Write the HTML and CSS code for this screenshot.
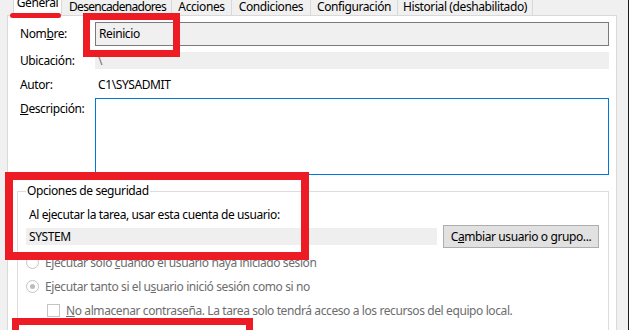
FILE: index.html
```html
<!DOCTYPE html>
<html lang="es">
<head>
    <meta charset="UTF-8">
    <title>Propiedades de la tarea</title>
    <link rel="stylesheet" href="styles.css">
</head>
<body>
    <div class="window">
        <div class="tabs">
            <div class="tab active tab-general">General</div>
            <div class="tab tab-triggers">Desencadenadores</div>
            <div class="tab tab-actions">Acciones</div>
            <div class="tab tab-conditions">Condiciones</div>
            <div class="tab tab-settings">Configuración</div>
            <div class="tab tab-history">Historial (deshabilitado)</div>
        </div>

        <div class="panel">
            <div class="row row-name">
                <label class="label">Nom<u>b</u>re:</label>
                <div class="field field-input">Reinicio</div>
            </div>
            <div class="row row-location">
                <label class="label">Ubicación:</label>
                <div class="field field-readonly">\</div>
            </div>
            <div class="row row-author">
                <label class="label">Autor:</label>
                <div class="field">C1\SYSADMIT</div>
            </div>
            <div class="row row-desc">
                <label class="label"><u>D</u>escripción:</label>
                <div class="field field-textarea"></div>
            </div>

            <fieldset class="group">
                <legend>Opciones de seguridad</legend>
                <p class="group-text">Al ejecutar la tarea, usar esta cuenta de usuario:</p>
                <div class="account-row">
                    <div class="account">SYSTEM</div>
                    <button class="btn">C<u>a</u>mbiar usuario o grupo...</button>
                </div>
                <div class="option option-first">
                    <span class="radio"></span>
                    <span>Ejecutar solo <u>c</u>uando el usuario haya iniciado sesión</span>
                </div>
                <div class="option">
                    <span class="radio checked"></span>
                    <span>Ejecutar tanto si el u<u>s</u>uario inició sesión como si no</span>
                </div>
                <div class="option option-sub">
                    <span class="checkbox"></span>
                    <span><u>N</u>o almacenar contraseña. La tarea solo tendrá acceso a los recursos del equipo local.</span>
                </div>
            </fieldset>
        </div>

        <!-- annotations drawn over the screenshot -->
        <div class="mark mark-tab"></div>
        <div class="mark mark-name"></div>
        <div class="mark mark-security"></div>
        <div class="mark mark-bottom"></div>
    </div>
</body>
</html>
```

FILE: styles.css
```css
/* General */
body {
    margin: 0;
    background-color: #f0f0f0;
    font-family: "Noto Sans", sans-serif;
    font-size: 12px;
    line-height: 16px;
    letter-spacing: -0.4px;
    color: #000;
    overflow: hidden;
}

.window {
    position: relative;
    width: 628px;
    height: 330px;
    border-right: 1px solid #1b1b1b;
    overflow: hidden;
}

/* Tabs */
.tabs {
    display: flex;
    align-items: flex-end;
    height: 15px;
    padding-left: 13px;
}

.tab {
    height: 18px;
    line-height: 18px;
    margin-top: -3px;
    border: 1px solid #d9d9d9;
    border-bottom: none;
    border-left: none;
    background-color: #f0f0f0;
    text-align: center;
    white-space: nowrap;
    box-sizing: border-box;
}

.tab.active {
    height: 22px;
    line-height: 16px;
    margin-right: 2px;
    border-left: 1px solid #d9d9d9;
    background-color: #ffffff;
    position: relative;
    z-index: 1;
    margin-bottom: -1px;
}

.tab-general { width: 49px; }
.tab-triggers { width: 108px; letter-spacing: -0.7px; }
.tab-actions { width: 60px; }
.tab-conditions { width: 79px; }
.tab-settings { width: 87px; }
.tab-history { width: 135px; }

/* Panel */
.panel {
    margin-left: 7px;
    width: 610px;
    height: 330px;
    background-color: #ffffff;
    border: 1px solid #d9d9d9;
    padding: 0 7px 0 9px;
    box-sizing: border-box;
}

.row {
    display: flex;
    align-items: center;
}

.label {
    width: 75px;
    padding-left: 3px;
    flex-shrink: 0;
}

.field {
    flex: 1;
    padding-left: 3px;
}

.row-name {
    margin-top: 6px;
}

.field-input {
    height: 22px;
    line-height: 22px;
    border: 1px solid #7a7a7a;
    background-color: #f0f0f0;
}

.row-location {
    margin-top: 6px;
}

.field-readonly {
    height: 17px;
    line-height: 17px;
    background-color: #efefef;
    color: #6d6d6d;
}

.row-author {
    margin-top: 7px;
    height: 17px;
}

.row-desc {
    margin-top: 5px;
    align-items: flex-start;
}

.row-desc .label {
    margin-top: 3px;
}

.field-textarea {
    height: 75px;
    border: 1px solid #0078d7;
}

/* Security group */
.group {
    margin: 8px 0 0 0;
    padding: 0 0 0 8px;
    border: 1px solid #dcdcdc;
    height: 160px;
}

.group legend {
    margin-left: 0;
    padding: 0 1px;
}

.group-text {
    margin: 8px 0 0 3px;
}

.account-row {
    display: flex;
    align-items: center;
    margin-top: 2px;
}

.account {
    width: 408px;
    height: 17px;
    line-height: 17px;
    padding-left: 3px;
    background-color: #efefef;
}

.btn {
    margin-left: 6px;
    width: 156px;
    height: 23px;
    padding: 0;
    font-family: inherit;
    font-size: 12px;
    letter-spacing: -0.4px;
    color: #000;
    background-color: #e1e1e1;
    border: 1px solid #adadad;
}

.option {
    display: flex;
    align-items: center;
    height: 17px;
    margin-top: 7px;
    color: #6d6d6d;
}

.option-first {
    margin-top: 6px;
}

.option-sub {
    padding-left: 21px;
}

.radio {
    width: 11px;
    height: 11px;
    margin-right: 6px;
    border: 1px solid #c4c4c4;
    border-radius: 50%;
    position: relative;
}

.radio.checked::after {
    content: "";
    position: absolute;
    left: 3px;
    top: 3px;
    width: 5px;
    height: 5px;
    border-radius: 50%;
    background-color: #bcbcbc;
}

.checkbox {
    width: 11px;
    height: 11px;
    margin-right: 6px;
    border: 1px solid #c4c4c4;
}

/* Red annotations */
.mark {
    position: absolute;
    border: 7px solid #ed1c24;
    box-sizing: border-box;
    z-index: 2;
}

.mark-tab {
    left: 10px;
    top: 13px;
    width: 51px;
    height: 5px;
    border: none;
    border-radius: 3px;
    background-color: #ed1c24;
}

.mark-name {
    left: 83px;
    top: 13px;
    width: 97px;
    height: 44px;
}

.mark-security {
    left: 5px;
    top: 172px;
    width: 304px;
    height: 88px;
    border-width: 8px;
}

.mark-bottom {
    left: 12px;
    top: 318px;
    width: 241px;
    height: 30px;
}
```
